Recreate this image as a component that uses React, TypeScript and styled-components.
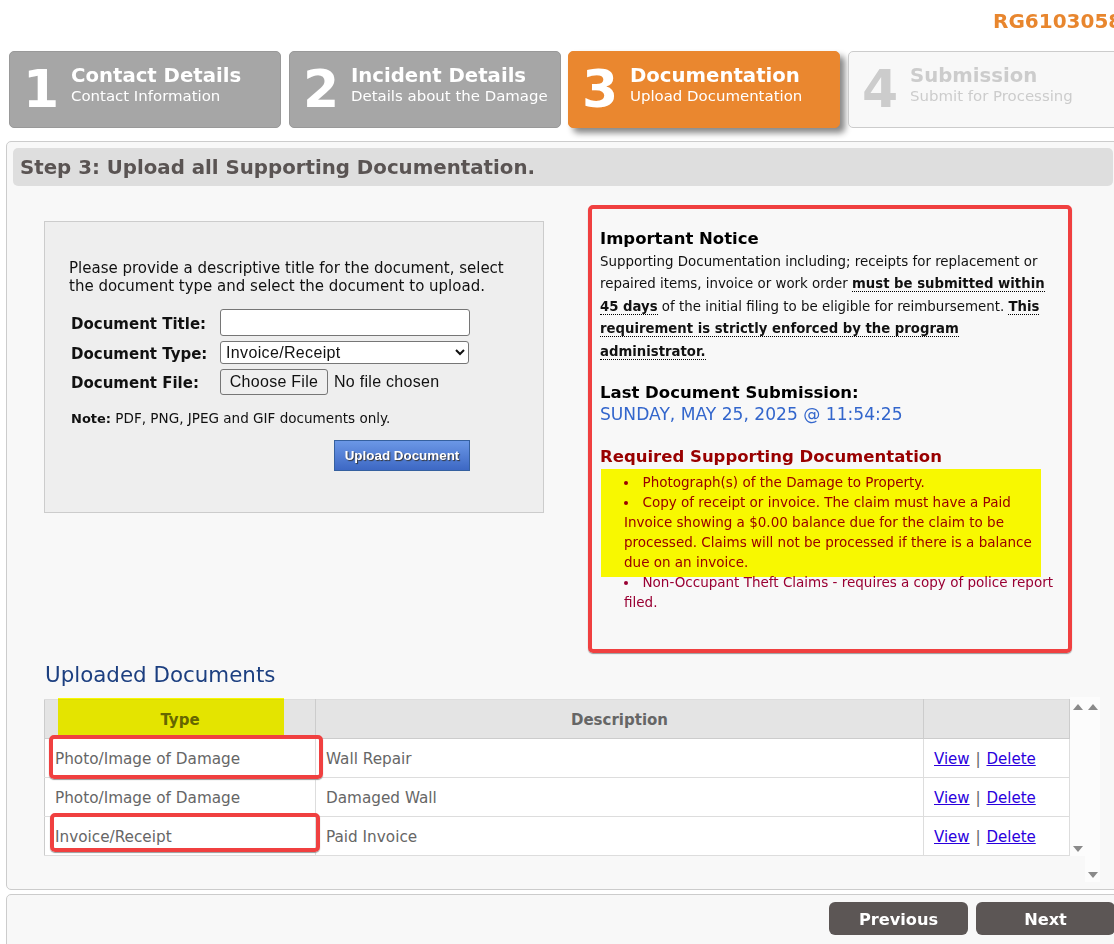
import React from "react";
import styled, { createGlobalStyle } from "styled-components";

const Global = createGlobalStyle`
  html, body { margin: 0; padding: 0; width: 1114px; height: 944px; overflow: hidden; background: #fff; }
  body { font-family: "DejaVu Sans", Verdana, sans-serif; color: #111; }
  * { box-sizing: border-box; }
`;
const Page = styled.div`width: 1130px; height: 944px; overflow: hidden;`;
const Header = styled.div`
  height: 51px; padding: 9px 0 0 993px; font-size: 20px; line-height: 24px; font-weight: bold;
  color: #e8862e; white-space: nowrap; overflow: hidden;
`;
const Steps = styled.div`display: flex; gap: 8px; padding-left: 9px; height: 77px;`;
const Step = styled.div<{ $state: "done" | "active" | "todo" }>`
  flex: 0 0 272px;
  display: flex; border-radius: 5px; padding: 8px 0 0 13px;
  background: ${(p) => (p.$state === "active" ? "#ea872f" : p.$state === "done" ? "#a6a6a6" : "#f8f8f8")};
  border: 1px solid ${(p) => (p.$state === "active" ? "#ea872f" : p.$state === "done" ? "#999" : "#ccc")};
  color: ${(p) => (p.$state === "todo" ? "#ccc" : "#fff")};
  box-shadow: ${(p) => (p.$state === "active" ? "5px 5px 6px #888" : "none")};
  &:nth-child(3) { margin-left: -1px; }
`;
const StepNum = styled.div`width: 48px; font-size: 52px; line-height: 58px; font-weight: bold;`;
const StepText = styled.div`padding-top: 4px;`;
const StepTitle = styled.div`font-size: 19.7px; line-height: 23px; font-weight: bold; white-space: nowrap;`;
const StepSub = styled.div`font-size: 14.95px; line-height: 18px; white-space: nowrap;`;
const Panel = styled.div`
  margin: 13px 0 0 6px; width: 1120px; height: 749px; background: #f8f8f8;
  border: 1px solid #ccc; border-radius: 5px; padding: 6px 0 0 6px;
`;
const TitleBar = styled.div`
  width: 1100px; height: 38px; background: #dedede; border-radius: 5px; padding: 1px 0 0 7px;
  font-size: 19.8px; line-height: 38px; font-weight: bold; color: #5a5453;
`;
const Columns = styled.div`display: flex; align-items: flex-start; padding: 19px 0 0 31px; height: 474px;`;
const UploadBox = styled.div`
  margin-top: 16px; width: 500px; height: 292px; background: #eee; border: 1px solid #ccc; padding: 37px 0 0 24px;
`;
const Intro = styled.p`margin: 0; font-size: 15px; line-height: 18px; color: #111;`;
const FormGrid = styled.div`
  display: grid; grid-template-columns: 149px 1fr; grid-template-rows: 27px 23px 26px; row-gap: 5px;
  margin-top: 14px; align-items: center; padding-left: 2px;
`;
const Label = styled.label`font-size: 15px; font-weight: bold; color: #111; padding-top: 2px;`;
const TextInput = styled.input`
  width: 250px; height: 27px; font: 16px "Liberation Sans", Arial, sans-serif; background: #fff;
  border: 1px solid #767676; border-radius: 3px; padding: 1px 2px; display: block;
`;
const Select = styled.select`
  width: 249px; height: 23px; font: 16px "Liberation Sans", Arial, sans-serif; letter-spacing: 0.35px; background: #fff; color: #111;
  border: 1px solid #767676; border-radius: 3px; display: block; padding-left: 1px;
`;
const FileInput = styled.input`
  font: 16px "Liberation Sans", Arial, sans-serif; letter-spacing: 0.28px; color: #111; display: block; width: 250px; margin-top: -1px;
  &::file-selector-button {
    font: 16px "Liberation Sans", Arial, sans-serif; letter-spacing: 0.28px; height: 26px; width: 108px; margin-right: 6px;
    background: #efefef; border: 1px solid #767676; border-radius: 3px; color: #111; padding: 0;
  }
`;
const Note = styled.p`margin: 14px 0 0 2px; font-size: 13.55px; line-height: 18px; color: #111;`;
const NoteLabel = styled.b`font-size: 13px;`;
const ActionRow = styled.div`display: flex; justify-content: flex-end; width: 401px; margin-top: 12px;`;
const UploadButton = styled.button`
  width: 136px; height: 31px; padding: 0; border: 1px solid #35609f; color: #fff;
  font: bold 13.4px "Liberation Sans", Arial, sans-serif; white-space: nowrap;
  background: linear-gradient(#6b97e6, #3d68c4); text-shadow: 1px 1px 1px #333;
`;
const Notice = styled.div`
  position: relative; margin-left: 44px; width: 484px; height: 448px; border: 4px solid #f04040; border-radius: 5px;
  padding: 19px 7px 0 8px; box-shadow: 0 1px 1px #999;
`;
const NoticeHeading = styled.div<{ $color?: string }>`
  font-size: 16.5px; line-height: 22px; font-weight: bold; color: ${(p) => p.$color || "#000"};
`;
const NoticeBody = styled.p`margin: 1px 0 19px; font-size: 13.38px; line-height: 22.4px; color: #111;`;
const Strong = styled.span`font-weight: bold; font-size: 13.25px; border-bottom: 1px dotted #000;`;
const DateLine = styled.div`font-size: 17.1px; line-height: 22px; color: #3366cc; margin: -1px 0 21px;`;
const DocList = styled.ul`margin: 4px 0 0; padding: 0 0 0 24px; list-style-position: inside; width: 460px;`;
const DocItem = styled.li`font-size: 13.5px; line-height: 20px; color: #990033;`;
const YellowWash = styled.div`
  position: absolute; left: 9px; top: 260px; width: 440px; height: 108px; background: #ffff00; mix-blend-mode: multiply;
`;
const DocsHeading = styled.h2`
  margin: 0 0 0 32px; font-size: 21.4px; line-height: 28px; font-weight: normal; color: #1c3f80; height: 39px; padding-top: 1px;
`;
const TableWrap = styled.div`position: relative; margin-left: 31px; width: 1056px;`;
const TableArea = styled.div`display: flex; align-items: flex-start;`;
const Table = styled.table`
  width: 1025px; border-collapse: collapse; table-layout: fixed; font-size: 15.25px; color: #666; background: #fff;
`;
const Th = styled.th<{ $w: number }>`
  width: ${(p) => p.$w}px; height: 39px; background: #e4e4e4; border: 1px solid #ccc; border-top-color: #ddd;
  font-size: 15px; font-weight: bold; color: #666; padding: 2px 0 0;
`;
const Td = styled.td`height: 39px; border: 1px solid #ddd; padding: 2px 10px 0; white-space: nowrap;
  &:first-child { border-left-color: #ccc; }
`;
const LinkA = styled.a`color: #2a00dd; text-decoration: underline; font-size: 15px;`;
const Separator = styled.span`margin: 0 1px;`;
const Scrollbars = styled.div`display: flex; height: 185px; margin-top: -2px;`;
const ScrollTrack = styled.div<{ $h: number }>`
  width: 15px; height: ${(p) => p.$h}px; background: #fcfcfc; display: flex; flex-direction: column;
  justify-content: space-between; align-items: center; padding: 7px 0 4px;
`;
const Arrow = styled.div<{ $down?: boolean }>`
  width: 0; height: 0; border-left: 5px solid transparent; border-right: 5px solid transparent;
  ${(p) => (p.$down ? "border-top: 6px solid #8a8a8a;" : "border-bottom: 6px solid #8a8a8a;")}
`;
const YellowType = styled.div`
  position: absolute; left: 14px; top: -1px; width: 226px; height: 40px; background: #ffff00; mix-blend-mode: multiply;
`;
const RedMark = styled.div<{ $l: number; $t: number; $w: number; $h: number }>`
  position: absolute; left: ${(p) => p.$l}px; top: ${(p) => p.$t}px; width: ${(p) => p.$w}px; height: ${(p) => p.$h}px;
  border: 4px solid #f04040; border-radius: 5px; box-shadow: 0 1px 1px #999;
`;
const Footer = styled.div`
  margin: 4px 0 0 6px; width: 1120px; height: 60px; background: #f8f8f8; border: 1px solid #ccc; border-radius: 5px;
  display: flex; gap: 8px; padding: 7px 0 0 822px;
`;
const NavButton = styled.button<{ $w: number }>`
  width: ${(p) => p.$w}px; height: 33px; border: 0; border-radius: 6px; background: #5c5655; color: #fff;
  font: bold 16.2px "DejaVu Sans", sans-serif; padding: 2px 0 0;
`;

const rows = [
  ["Photo/Image of Damage", "Wall Repair"],
  ["Photo/Image of Damage", "Damaged Wall"],
  ["Invoice/Receipt", "Paid Invoice"],
];
const steps: { n: number; t: string; s: string; st: "done" | "active" | "todo" }[] = [
  { n: 1, t: "Contact Details", s: "Contact Information", st: "done" },
  { n: 2, t: "Incident Details", s: "Details about the Damage", st: "done" },
  { n: 3, t: "Documentation", s: "Upload Documentation", st: "active" },
  { n: 4, t: "Submission", s: "Submit for Processing", st: "todo" },
];

export default function App() {
  return (
    <Page>
      <Global />
      <Header>RG6103058</Header>
      <Steps>
        {steps.map((s) => (
          <Step key={s.n} $state={s.st}>
            <StepNum>{s.n}</StepNum>
            <StepText>
              <StepTitle>{s.t}</StepTitle>
              <StepSub>{s.s}</StepSub>
            </StepText>
          </Step>
        ))}
      </Steps>
      <Panel>
        <TitleBar>Step 3: Upload all Supporting Documentation.</TitleBar>
        <Columns>
          <UploadBox>
            <Intro>
              Please provide a descriptive title for the document, select
              <br />
              the document type and select the document to upload.
            </Intro>
            <FormGrid>
              <Label>Document Title:</Label>
              <TextInput type="text" />
              <Label>Document Type:</Label>
              <Select defaultValue="Invoice/Receipt">
                <option>Invoice/Receipt</option>
                <option>Photo/Image of Damage</option>
              </Select>
              <Label>Document File:</Label>
              <FileInput type="file" />
            </FormGrid>
            <Note>
              <NoteLabel>Note:</NoteLabel> PDF, PNG, JPEG and GIF documents only.
            </Note>
            <ActionRow>
              <UploadButton>Upload Document</UploadButton>
            </ActionRow>
          </UploadBox>
          <Notice>
            <NoticeHeading>Important Notice</NoticeHeading>
            <NoticeBody>
              Supporting Documentation including; receipts for replacement or repaired items, invoice or work order{" "}
              <Strong>must be submitted within 45 days</Strong> of the initial filing to be eligible for reimbursement.{" "}
              <Strong>This requirement is strictly enforced by the program administrator.</Strong>
            </NoticeBody>
            <NoticeHeading>Last Document Submission:</NoticeHeading>
            <DateLine>SUNDAY, MAY 25, 2025 @ 11:54:25</DateLine>
            <NoticeHeading $color="#990000">Required Supporting Documentation</NoticeHeading>
            <DocList>
              <DocItem>Photograph(s) of the Damage to Property.</DocItem>
              <DocItem>
                Copy of receipt or invoice. The claim must have a Paid Invoice showing a $0.00 balance due for the claim
                to be processed. Claims will not be processed if there is a balance due on an invoice.
              </DocItem>
              <DocItem>Non-Occupant Theft Claims - requires a copy of police report filed.</DocItem>
            </DocList>
            <YellowWash />
          </Notice>
        </Columns>
        <DocsHeading>Uploaded Documents</DocsHeading>
        <TableWrap>
          <TableArea>
            <Table>
              <thead>
                <tr>
                  <Th $w={271}>Type</Th>
                  <Th $w={608}>Description</Th>
                  <Th $w={146}></Th>
                </tr>
              </thead>
              <tbody>
                {rows.map((r, i) => (
                  <tr key={i}>
                    <Td>{r[0]}</Td>
                    <Td>{r[1]}</Td>
                    <Td>
                      <LinkA href="#">View</LinkA> <Separator>|</Separator> <LinkA href="#">Delete</LinkA>
                    </Td>
                  </tr>
                ))}
              </tbody>
            </Table>
            <Scrollbars>
              <ScrollTrack $h={159}>
                <Arrow />
                <Arrow $down />
              </ScrollTrack>
              <ScrollTrack $h={185}>
                <Arrow />
                <Arrow $down />
              </ScrollTrack>
            </Scrollbars>
          </TableArea>
          <YellowType />
          <RedMark $l={5} $t={36} $w={274} $h={44} />
          <RedMark $l={6} $t={114} $w={270} $h={39} />
        </TableWrap>
      </Panel>
      <Footer>
        <NavButton $w={139}>Previous</NavButton>
        <NavButton $w={139}>Next</NavButton>
      </Footer>
    </Page>
  );
}
